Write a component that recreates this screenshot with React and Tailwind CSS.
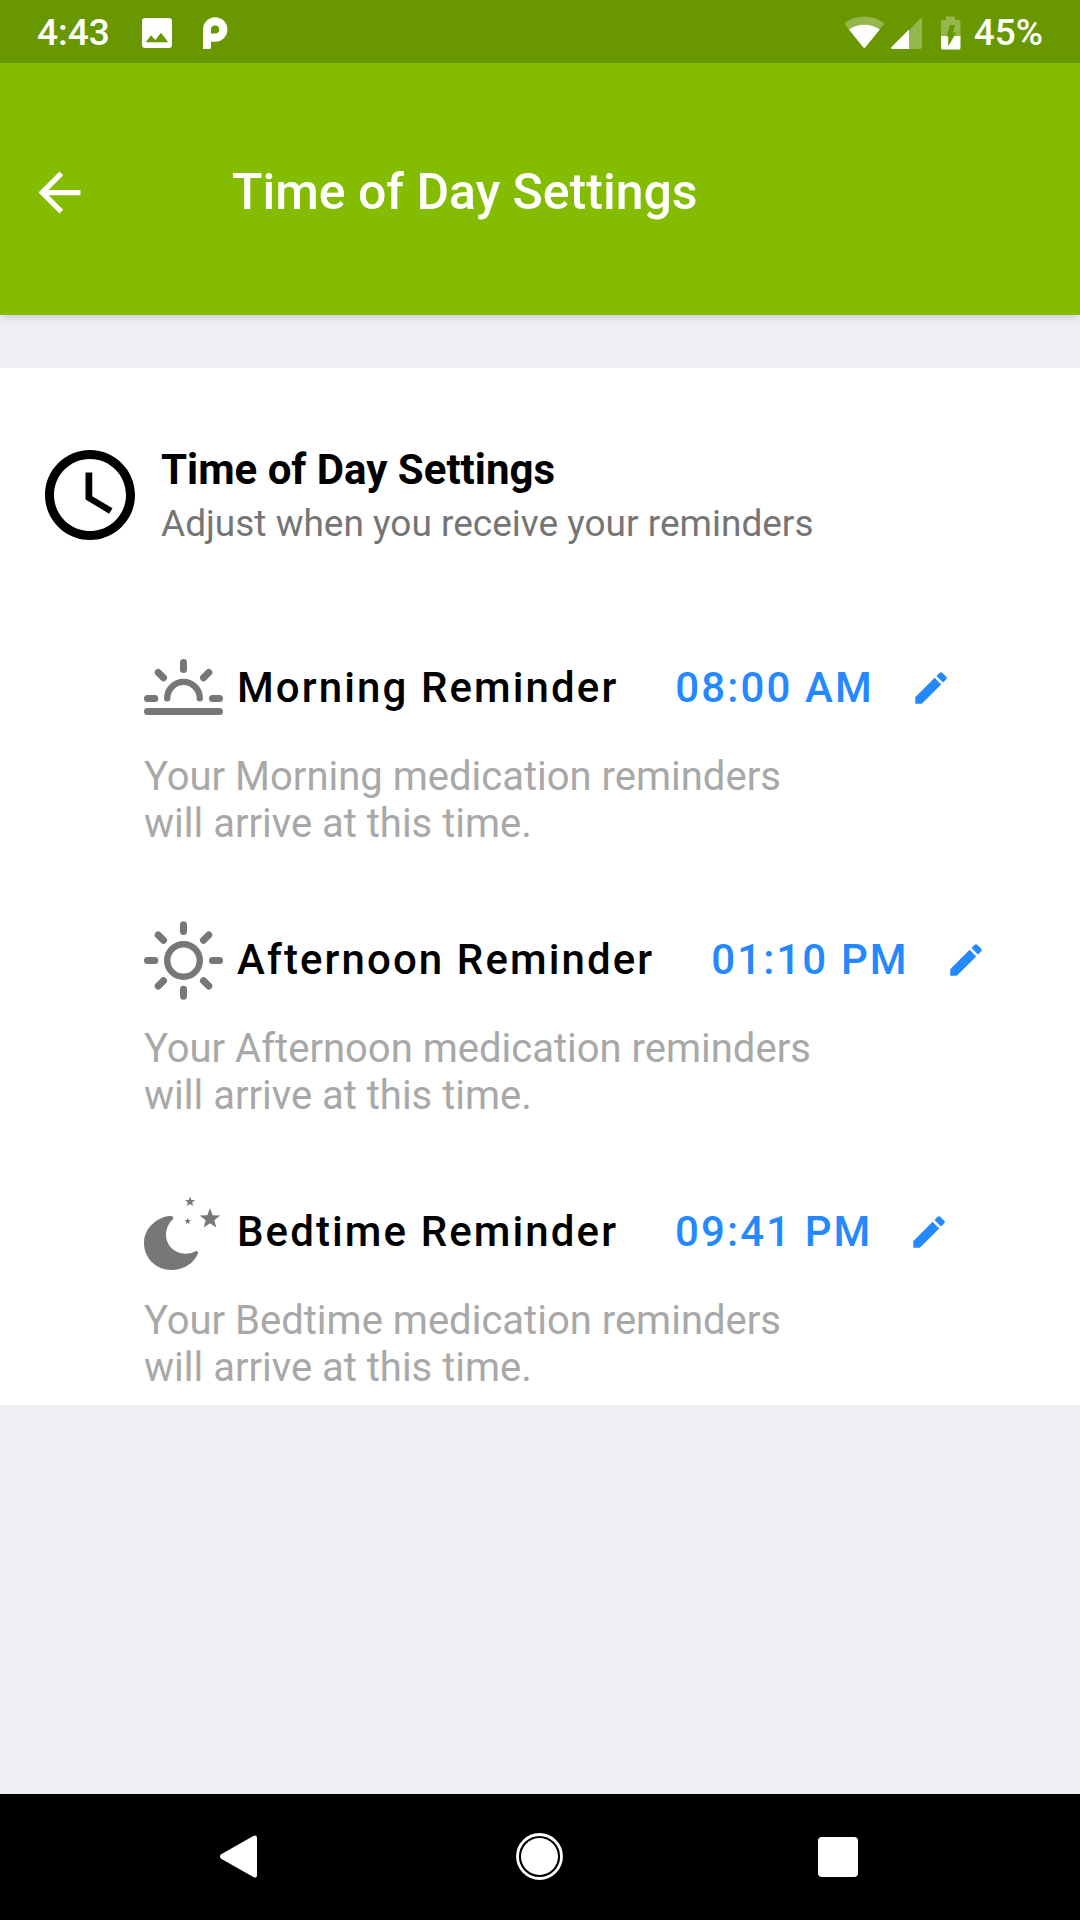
import React from "react";

function starPath(cx, cy, r) {
  const points = [];
  for (let i = 0; i < 10; i++) {
    const radius = i % 2 === 0 ? r : r * 0.42;
    const angle = (Math.PI / 5) * i - Math.PI / 2;
    points.push(
      `${(cx + radius * Math.cos(angle)).toFixed(2)} ${(cy + radius * Math.sin(angle)).toFixed(2)}`
    );
  }
  return `M${points.join("L")}Z`;
}

function SunriseIcon() {
  return (
    <svg viewBox="0 0 80 80" className="size-20 shrink-0" fill="none" stroke="#777777" strokeWidth="7" strokeLinecap="round" aria-hidden="true">
      <path d="M39.5 14.5V21.5M14.2 24.5L19.5 29.8M64.8 24.5L59.5 29.8M3.5 50.5H10.8M68.5 50.5H75.5M3.5 63.5H75.5" />
      <path d="M23.2 50.2A16.3 16.3 0 0 1 55.8 50.2" strokeWidth="6.4" />
    </svg>
  );
}

function SunIcon() {
  return (
    <svg viewBox="0 0 80 80" className="size-20 shrink-0" fill="none" stroke="#777777" strokeWidth="7" strokeLinecap="round" aria-hidden="true">
      <path d="M39.5 4.7V11.5M39.5 69.3V76.3M3.5 40.5H10.8M68.5 40.5H75.5M14.2 15L19.5 20.3M64.8 15L59.5 20.3M14.2 66L19.5 60.7M64.8 66L59.5 60.7" />
      <circle cx="39.5" cy="40.5" r="16.3" strokeWidth="6.4" />
    </svg>
  );
}

function MoonIcon() {
  return (
    <svg viewBox="0 0 80 80" className="size-20 shrink-0" fill="#777777" aria-hidden="true">
      <path d="M26 24C12 25 0 37 0 51C0 66 12 78 27.5 78C40 78 50 71 54 61.5C54.5 59.5 53 58.5 51 59.2C48 61 45 61.7 41 61.7C30 61.5 22 53 22 43C22 37 24.5 31 29 27.2C30 25.5 28.5 23.8 26 24Z" />
      <path d={starPath(66, 26.8, 10.8)} />
      <path d={starPath(46, 9.8, 5.3)} />
      <path d={starPath(43.7, 29.2, 3.4)} />
    </svg>
  );
}

function StatusBar() {
  return (
    <div className="flex h-[63px] items-center bg-[#689700] px-[37px] pt-0.5 text-[37px] leading-none font-medium text-white">
      <span>4:43</span>
      <svg viewBox="0 0 30 30" className="ml-8 size-[30px]" aria-hidden="true">
        <path fill="#fff" fillRule="evenodd" d="M3 0H27Q30 0 30 3V27Q30 30 27 30H3Q0 30 0 27V3Q0 0 3 0ZM3.7 24.3H26.2L19 14.7L13.3 22L9 17.3Z" />
      </svg>
      <svg viewBox="0 0 26 34" className="ml-[30px] h-[34px] w-[26px]" aria-hidden="true">
        <path fill="#fff" fillRule="evenodd" d="M1 13.5A12.2 12.2 0 1 1 13.2 25.7H9V31.5Q9 33 7.5 33H1ZM9 17.6H13.2A4.1 4.1 0 1 0 9 13.5Z" />
      </svg>
      <div className="ml-auto flex items-center">
        <svg viewBox="0 0 41 34" className="h-[34px] w-[41px]" aria-hidden="true">
          <path fill="#fff" fillOpacity=".3" d="M19 31Q20.3 32.5 21.6 31L39.6 8.5Q40.3 7.3 39.3 6.5Q31 .5 20.3 .5Q9.5 .5 1.2 6.5Q.2 7.3 1 8.5Z" />
          <path fill="#fff" d="M19 31Q20.3 32.5 21.6 31L35.8 13.4Q29 8.7 20.3 8.7Q11.5 8.7 5 13.4Z" />
        </svg>
        <svg viewBox="0 0 32 34" className="ml-[6px] h-[34px] w-8" aria-hidden="true">
          <path fill="#fff" fillOpacity=".3" d="M18 14.5L29 2.5Q31 1.2 31 3.5V31Q31 33 29 33H18Z" />
          <path fill="#fff" d="M18 13.5V33H.8Q-.5 32.5 .5 31Z" />
        </svg>
        <svg viewBox="0 0 20 34" className="ml-[18px] h-[34px] w-5" aria-hidden="true">
          <path fill="#fff" fillOpacity=".3" d="M5 0.5H14V4H18Q19.5 4 19.5 5.5V20H0V5.5Q0 4 1.5 4H5Z" />
          <path fill="#fff" d="M0 20H19.5V32Q19.5 33.5 18 33.5H1.5Q0 33.5 0 32Z" />
          <path fill="#689700" d="M8.8 9H14L11.8 16.5H15.3L7.2 30.5V20.5H5.7Z" />
        </svg>
        <span className="ml-[13px]">45%</span>
      </div>
    </div>
  );
}

function Header() {
  return (
    <header className="flex h-[252px] items-center bg-[#83bc00] px-7 pt-1.5 text-white shadow-[0_4px_8px_-2px_rgba(0,0,0,0.16)]">
      <button type="button" aria-label="Back" className="shrink-0">
        <svg viewBox="0 0 24 24" className="size-[63px]" fill="#fff" aria-hidden="true">
          <path d="M20 11H7.83l5.59-5.59L12 4l-8 8 8 8 1.41-1.41L7.83 13H20v-2z" />
        </svg>
      </button>
      <h1 className="ml-[141px] text-[50px] leading-[60px] font-medium">Time of Day Settings</h1>
    </header>
  );
}

const reminders = [
  { name: "Morning", time: "08:00 AM", Icon: SunriseIcon },
  { name: "Afternoon", time: "01:10 PM", Icon: SunIcon },
  { name: "Bedtime", time: "09:41 PM", Icon: MoonIcon },
];

function Reminder({ name, time, Icon }) {
  return (
    <li>
      <div className="flex h-20 items-center text-[42px] leading-[50px] font-medium tracking-wider whitespace-nowrap">
        <Icon />
        <h3 className="ml-[13px] text-black">{`${name} Reminder`}</h3>
        <button type="button" aria-label={`Edit ${name} Reminder, ${time}`} className="ml-[57px] flex items-center gap-9 text-[#2488ff]">
          <span>{time}</span>
          <svg viewBox="0 0 24 24" className="size-[42px]" fill="currentColor" aria-hidden="true">
            <path d="M3 17.25V21h3.75L17.81 9.94l-3.75-3.75L3 17.25zM20.71 7.04c.39-.39.39-1.02 0-1.41l-2.34-2.34c-.39-.39-1.02-.39-1.41 0l-1.83 1.83 3.75 3.75 1.83-1.83z" />
          </svg>
        </button>
      </div>
      <p className="mt-[25px] max-w-[690px] text-[40px] leading-[47px] text-[#a8a8a8]">
        {`Your ${name} medication reminders will arrive at this time.`}
      </p>
    </li>
  );
}

function NavigationBar() {
  return (
    <nav className="grid h-[126px] grid-cols-3 items-center justify-items-center bg-black px-[90px]">
      <button type="button" aria-label="Back">
        <svg viewBox="0 0 48 48" className="size-12" fill="#fff" aria-hidden="true">
          <path d="M5.2 21.3L37.3 3Q41 1.3 41 5V42Q41 45.7 37.3 44L5.2 25.7Q2.8 23.5 5.2 21.3Z" />
        </svg>
      </button>
      <button type="button" aria-label="Home">
        <svg viewBox="0 0 48 48" className="size-12" aria-hidden="true">
          <circle cx="23.5" cy="23.5" r="22" fill="none" stroke="#fff" strokeWidth="2.8" />
          <circle cx="23.5" cy="23.5" r="18.5" fill="#fff" />
        </svg>
      </button>
      <button type="button" aria-label="Recent apps">
        <svg viewBox="0 0 48 48" className="size-12" aria-hidden="true">
          <rect x="2" y="4" width="40" height="40" rx="4" fill="#fff" />
        </svg>
      </button>
    </nav>
  );
}

export default function App() {
  return (
    <div className="flex min-h-screen flex-col bg-[#efeef5] font-['Roboto',sans-serif]">
      <StatusBar />
      <Header />
      <main className="mt-[53px] flex-1">
        <section className="bg-white pt-[73px] pb-[14px]">
          <div className="flex items-start pl-9">
            <svg viewBox="0 0 24 24" className="size-[108px] shrink-0" aria-hidden="true">
              <path d="M11.99 2C6.47 2 2 6.48 2 12s4.47 10 9.99 10C17.52 22 22 17.52 22 12S17.52 2 11.99 2zM12 20c-4.42 0-8-3.58-8-8s3.58-8 8-8 8 3.58 8 8-3.58 8-8 8zm.5-13H11v6l5.25 3.15.75-1.23-4.5-2.67z" />
            </svg>
            <div className="ml-[17px] pt-0.5 leading-[54px]">
              <h2 className="text-[42px] font-bold text-black">Time of Day Settings</h2>
              <p className="text-[37px] text-[#757575]">Adjust when you receive your reminders</p>
            </div>
          </div>
          <ul className="mt-[97px] flex flex-col gap-[73px] pl-36">
            {reminders.map((reminder) => (
              <Reminder key={reminder.name} {...reminder} />
            ))}
          </ul>
        </section>
      </main>
      <NavigationBar />
    </div>
  );
}
